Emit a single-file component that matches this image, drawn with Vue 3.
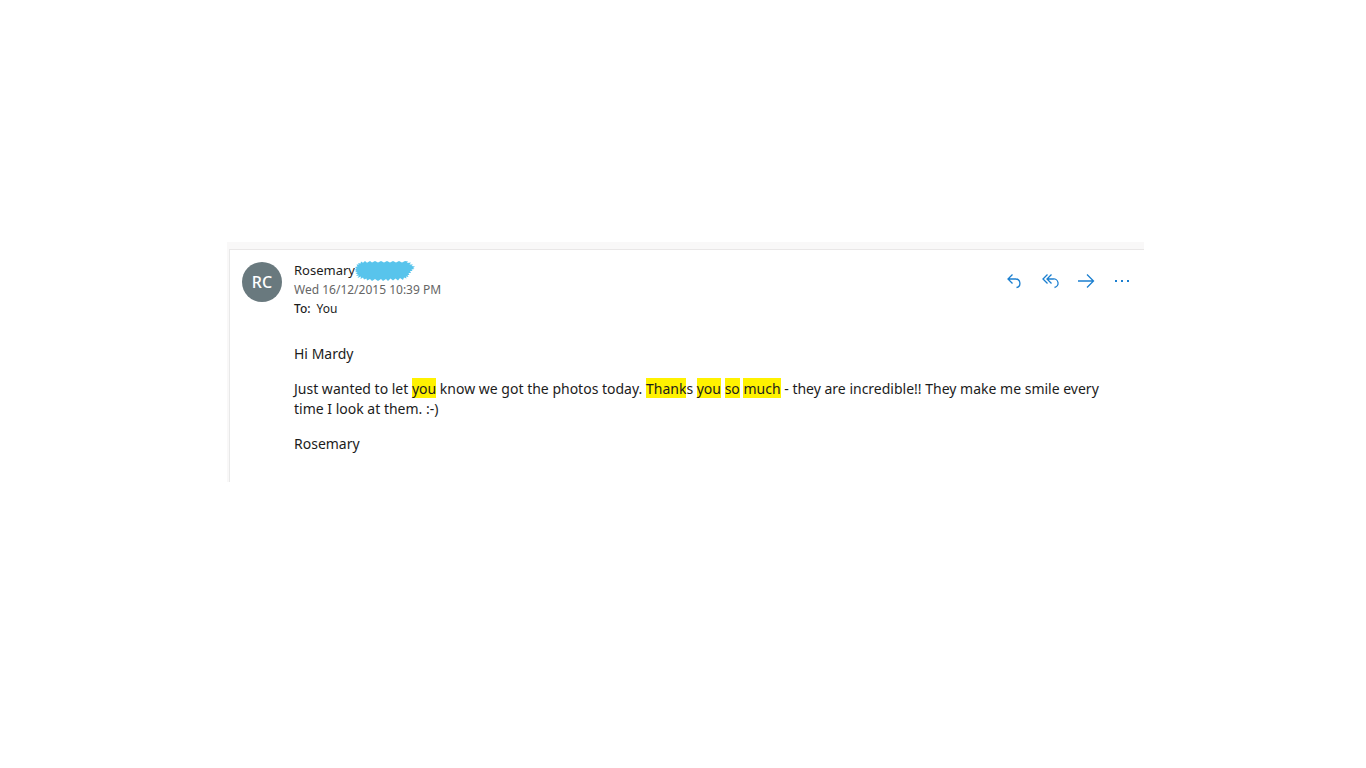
<script setup>
const sender = { name: 'Rosemary', initials: 'RC' }
const body = [
  { text: 'Just wanted to let ' },
  { text: 'you', mark: true },
  { text: ' know we got the photos today. ' },
  { text: 'Thank', mark: true },
  { text: 's ' },
  { text: 'you', mark: true },
  { text: ' ' },
  { text: 'so', mark: true },
  { text: ' ' },
  { text: 'much', mark: true },
  { text: ' - they are incredible!! They make me smile every time I look at them. :-)' },
]
</script>

<template>
  <main class="page">
    <section class="pane">
      <article class="message">
        <div class="avatar">{{ sender.initials }}</div>
        <div class="content">
          <header class="header">
            <div class="details">
              <div class="from">
                <span>{{ sender.name }}</span>
                <svg class="scribble" width="60" height="20" viewBox="0 0 60 20" aria-hidden="true">
                  <path d="M0 9 1.500 7.500 0 6 2.500 5.500 1.500 3.500 4 3.500 3 2 5.500 2.500 6 0.500 8 1.800 10 0 12 1.800 15 0 17 1.500 20 0 23 1.500 26 0 29 1.500 32 0 35 1.500 38 0 41 1.600 44 0 47 1.500 50 0 53 0.500 52 2 56 1.500 54.500 3.500 58 3.500 56.500 5 60 5.500 58 7 59.500 8 56.500 8.500 57.500 10 55 10 56 12 53.500 12 54.500 14 52.500 14 53.500 16 51 15.500 51.500 17.500 49 16.500 48 19 45 17 43 19.500 40.500 17.500 38 19.500 35.500 17.500 33 20 31 18 28 20 26 18 23 20 20 18 17 20 15 18 12 19.500 11.500 17.500 9 18.500 8 16.500 5.500 18 6 15.500 2.500 17 4 14.500 1 15 3 13 0.500 13 2.500 11.500 0 11 1.500 10Z" />
                </svg>
              </div>
              <time class="date" datetime="2015-12-16T22:39">Wed 16/12/2015 10:39 PM</time>
              <div class="to"><span class="label">To:</span><span>You</span></div>
            </div>
            <div class="actions">
              <button type="button" aria-label="Reply">
                <svg width="20" height="20" viewBox="0 0 20 20"><path d="M8.500 3.500 4 8 8.500 12.500M4 8H11.500A4.300 4.300 0 0 1 12.500 16.500" /></svg>
              </button>
              <button type="button" aria-label="Reply all">
                <svg width="20" height="20" viewBox="0 0 20 20"><path d="M7.500 3.500 3 8 7.500 12.500M11.500 3.500 7 8 11.500 12.500M7 8H13A4.300 4.300 0 0 1 14.500 16.500" /></svg>
              </button>
              <button type="button" aria-label="Forward">
                <svg width="20" height="20" viewBox="0 0 20 20"><path d="M2 10H17.500M11 3.500 17.500 10 11 16.500" /></svg>
              </button>
              <button type="button" aria-label="More actions">
                <svg width="20" height="20" viewBox="0 0 20 20"><path class="dots" d="M3 9h2v2H3zM9 9h2v2h-2zM15 9h2v2h-2z" /></svg>
              </button>
            </div>
          </header>
          <div class="body">
            <p>Hi Mardy</p>
            <p><template v-for="(part, i) in body" :key="i"><mark v-if="part.mark">{{ part.text }}</mark><template v-else>{{ part.text }}</template></template></p>
            <p>Rosemary</p>
          </div>
        </div>
      </article>
    </section>
  </main>
</template>

<style>
body {
  margin: 0;
  background: #fff;
}
</style>

<style scoped>
.page {
  padding: 242px 222px 0 227px;
  font-family: "Noto Sans", "Open Sans", sans-serif;
  color: #1c1c1c;
}
.pane {
  padding: 7px 0 0 2px;
  background: #f9f8f8;
}
.message {
  display: flex;
  gap: 12px;
  padding: 11px 12px 28px;
  border-top: 1px solid #e9e7e7;
  border-left: 1px solid #e9e9e9;
  background: #fff;
}
.avatar {
  display: flex;
  flex: none;
  align-items: center;
  justify-content: center;
  width: 40px;
  height: 40px;
  margin-top: 1px;
  border-radius: 50%;
  background: #69797e;
  color: #fff;
  font-size: 16px;
  font-weight: 500;
}
.content {
  flex: 1;
  min-width: 0;
}
.header {
  display: flex;
  justify-content: space-between;
}
.from {
  display: flex;
  font-size: 13px;
  line-height: 19px;
}
.scribble {
  flex: none;
  height: 20px;
  margin-bottom: -1px;
  fill: #58c4ec;
}
.date {
  display: block;
  color: #666;
  font-size: 12px;
  line-height: 19px;
}
.to {
  display: flex;
  gap: 6px;
  font-size: 12px;
  line-height: 19px;
}
.label {
  font-weight: 500;
}
.actions {
  display: flex;
  gap: 16px;
  padding-top: 10px;
}
.actions button {
  width: 20px;
  height: 20px;
  padding: 0;
  border: 0;
  background: none;
}
.actions svg {
  display: block;
  fill: none;
  stroke: #1b7fd0;
  stroke-width: 1.3;
}
.actions .dots {
  fill: #1b7fd0;
  stroke: none;
}
.body {
  padding-top: 26px;
  font-size: 14px;
  line-height: 20px;
}
.body p {
  margin: 0 0 15px;
}
.body p:last-child {
  margin: 0;
}
mark {
  padding-top: 1px;
  background: #fff200;
  color: inherit;
}
</style>
